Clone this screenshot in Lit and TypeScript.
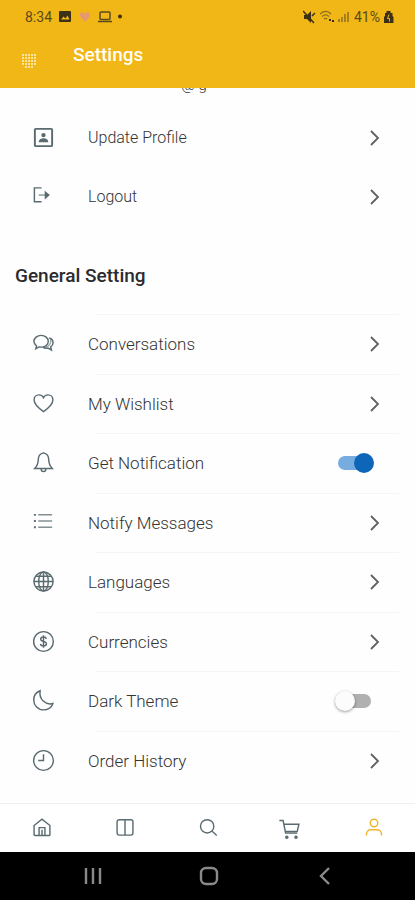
import { LitElement, html, svg, css, nothing } from "lit";
import { customElement, property, state } from "lit/decorators.js";
import { classMap } from "lit/directives/class-map.js";

const rowIcons: Record<string, unknown> = {
  profile: svg`<rect x="3" y="3" width="18" height="18" rx="1" stroke-width="2"/><circle cx="12" cy="9.5" r="2.3" fill="currentColor" stroke="none"/><path d="M7 17c0-3.2 3-4.2 5-4.2s5 1 5 4.2z" fill="currentColor" stroke="none"/>`,
  logout: svg`<path d="M10 3H2.500v14.500H10"/><path d="M7 10.500h10" opacity=".7"/><path d="M14 7.500l3.500 3-3.500 3z" fill="currentColor"/>`,
  chat: svg`<path d="M9.500 3.500c-4 0-7.500 2.700-7.500 6.200 0 2 1.100 3.700 2.800 4.900L4 17.500l3.300-1.900c.7.2 1.400.2 2.200.2 4.200 0 7.500-2.700 7.500-6.100s-3.300-6.200-7.500-6.200z"/><path d="M18 6.200c2.500.8 4 2.600 4 4.900 0 1.900-1 3.400-2.500 4.500l.8 3.200-3.500-2c-2.100.4-4 0-5.500-1"/><path d="M19.500 8c.8 3.400-1.300 7-6 8" opacity=".6"/>`,
  heart: svg`<path d="M12 20.500C6.500 16.500 2.200 12.700 2.200 8.300 2.200 5.300 4.400 3 7.200 3c2 0 3.800 1 4.800 2.900C13 4 14.800 3 16.800 3c2.800 0 5 2.300 5 5.300 0 4.400-4.300 8.200-9.800 12.200z"/>`,
  bell: svg`<path d="M12 2c-3.800.8-5.500 3.500-5.500 7.500 0 4.300-1.500 6.500-3.700 8.800h18.400c-2.200-2.300-3.700-4.500-3.700-8.800 0-4-1.700-6.700-5.500-7.500z"/><path d="M9.500 18.500c0 1.800 1 3 2.500 3s2.500-1.200 2.500-3"/>`,
  list: svg`<path d="M6.500 4h14.500M6.500 10.500h14.500M6.500 17h14.500" opacity=".75"/><path d="M2 4h2M2 10.500h2M2 17h2" stroke-width="2"/>`,
  globe: svg`<circle cx="12" cy="12" r="10"/><ellipse cx="12" cy="12" rx="5" ry="10"/><path d="M12 2v20M2 12h20M4 6.500h16M4 17.500h16"/>`,
  dollar: svg`<circle cx="12" cy="12" r="10.300"/><path d="M15 9.300c-.3-1.300-1.400-1.900-3-1.900s-2.900.8-2.900 2.200c0 3.100 6 1.500 6 4.700 0 1.500-1.300 2.300-3.100 2.300s-3-.8-3.200-2.200M12 5.600v12.800"/>`,
  moon: svg`<path d="M8.500 1.800C4.300 3.400 1.800 7 1.800 11.500c0 5.700 4.500 10.300 10.300 10.300 4.500 0 8.500-2.700 9.700-6.600-7.700 1.800-14.800-4.200-13.300-13.400z"/>`,
  clock: svg`<circle cx="12" cy="12" r="10.300"/><path d="M12 5.500V12H6.500"/>`,
};

const tabIcons: Record<string, unknown> = {
  home: svg`<path d="M2.500 9L12 1.500 21.500 9v11a1 1 0 0 1-1 1h-17a1 1 0 0 1-1-1z"/><path d="M8.500 21v-9.500h7V21M12 14v7"/>`,
  columns: svg`<rect x="2.500" y="2" width="19" height="18.500" rx="2.500"/><path d="M12 2v18.500"/>`,
  search: svg`<circle cx="11" cy="10" r="8"/><path d="M17 16l5.500 5"/>`,
  cart: svg`<path d="M-2 3h4.500l3 15h14M3.500 7.500h18l-2 8.500H5.500"/><circle cx="7" cy="23" r="1.300" fill="currentColor"/><circle cx="18" cy="23" r="1.300" fill="currentColor"/>`,
  user: svg`<circle cx="12" cy="6" r="4.500"/><path d="M3 21v-1.500c0-3.300 2.400-5.500 5.500-5.500h7c3.100 0 5.500 2.200 5.500 5.500V21"/>`,
};

@customElement("setting-row")
export class SettingRow extends LitElement {
  @property() icon = "";
  @property() text = "";
  @property({ type: Boolean }) toggle = false;
  @property({ type: Boolean }) on = false;
  @property({ type: Boolean }) lined = false;

  static styles = css`
    :host { display: flex; }
    .row {
      flex: 1; display: grid; grid-template-columns: 56px 1fr; align-items: stretch;
      padding: 0 16px 0 32px; margin: 0; border: 0; background: none;
      font: inherit; color: inherit; text-align: left; cursor: pointer;
    }
    .icon { align-self: center; width: 23px; height: 23px; color: #5a6b70; fill: none; stroke: currentColor; stroke-width: 1.5; }
    .body {
      display: flex; align-items: center; justify-content: space-between;
      padding-right: 18px; border-top: 1px solid transparent;
    }
    .lined { border-image: linear-gradient(to right, transparent 8px, #f5f5f5 8px) 1; }
    .chevron { width: 12px; height: 18px; fill: none; stroke: #606060; stroke-width: 1.8; }
    .switch {
      appearance: none; position: relative; width: 34px; height: 14px; margin: 0 10px 0 0;
      border-radius: 7px; background: #b0b0b0; cursor: pointer;
    }
    .switch::before {
      content: ""; position: absolute; top: -3px; left: -2px; width: 20px; height: 20px;
      border-radius: 50%; background: #fcfcfc; box-shadow: 0 1px 3px #0006;
    }
    .switch:checked { background: #77ace0; margin-right: 9px; }
    .switch:checked::before { left: 16px; background: #0e66b9; box-shadow: none; }
  `;

  private body(control: unknown) {
    return html`
      <svg class="icon" viewBox="0 0 24 24" aria-hidden="true">${rowIcons[this.icon]}</svg>
      <span class=${classMap({ body: true, lined: this.lined })}><span>${this.text}</span>${control}</span>`;
  }

  render() {
    return this.toggle
      ? html`<label class="row">${this.body(html`<input class="switch" type="checkbox" role="switch" .checked=${this.on} />`)}</label>`
      : html`<button class="row">${this.body(html`<svg class="chevron" viewBox="0 0 12 18" aria-hidden="true"><path d="M2 2l7 7-7 7" /></svg>`)}</button>`;
  }
}

interface Item { icon: string; text: string; toggle?: boolean; on?: boolean }

const account: Item[] = [
  { icon: "profile", text: "Update Profile" },
  { icon: "logout", text: "Logout" },
];

const general: Item[] = [
  { icon: "chat", text: "Conversations" },
  { icon: "heart", text: "My Wishlist" },
  { icon: "bell", text: "Get Notification", toggle: true, on: true },
  { icon: "list", text: "Notify Messages" },
  { icon: "globe", text: "Languages" },
  { icon: "dollar", text: "Currencies" },
  { icon: "moon", text: "Dark Theme", toggle: true },
  { icon: "clock", text: "Order History" },
];

@customElement("app-root")
export class AppRoot extends LitElement {
  @state() private tab = "user";

  static styles = css`
    :host {
      display: flex; flex-direction: column; min-height: 100vh; background: #fefefe;
      font: 300 17px/24px Roboto, "Noto Sans", sans-serif; color: #333;
    }
    .top { background: #f1b716; height: 88px; }
    .status { display: flex; align-items: center; justify-content: space-between; height: 34px; padding: 0 21px 0 25px; font-weight: 400; font-size: 14px; color: #5b4a1c; }
    .group { display: flex; align-items: center; gap: 6px; }
    .tight { gap: 3px; }
    .glyph { width: 14px; height: 14px; display: block; }
    .battery { width: 11px; }
    .bar { display: flex; align-items: center; height: 42px; padding-left: 20px; }
    .menu { display: flex; padding: 0; margin: 12px 0 0; border: 0; background: none; cursor: pointer; }
    .dots { width: 18px; height: 18px; fill: #fff3cf; }
    .title { margin: 0 0 0 35px; font-size: 19px; line-height: 24px; font-weight: 500; color: #fffdf5; }
    main { flex: 1; display: flex; flex-direction: column; }
    .email { display: flex; align-items: flex-end; justify-content: center; height: 20px; overflow: hidden; margin-right: 27px; font-size: 15px; }
    .email span { height: 35px; }
    .account { display: grid; grid-auto-rows: 59px; font-size: 16px; }
    .heading { margin: 38px 15px 26px; font-size: 19px; line-height: 24px; font-weight: 500; color: #2b2b2f; }
    .general { flex: 1; display: grid; grid-auto-rows: minmax(56px, 1fr); padding-bottom: 13px; }
    .tabs { display: grid; grid-template-columns: repeat(5, 1fr); height: 49px; border-top: 1px solid #f0f0f0; box-sizing: border-box; background: #fff; }
    .tab { display: grid; place-items: center; padding: 0; border: 0; background: none; color: #5a6b70; cursor: pointer; }
    .active { color: #eeb52a; }
    .tabicon { width: 20px; height: 20px; fill: none; stroke: currentColor; stroke-width: 1.7; overflow: visible; }
    .system { display: grid; grid-template-columns: repeat(3, 1fr); height: 48px; padding: 0 32px 0 35px; background: #000; }
    .key { display: grid; place-items: center; padding: 0; border: 0; background: none; cursor: pointer; }
    .keyicon { width: 20px; height: 20px; fill: none; stroke: #8a8a8a; stroke-width: 2.4; }
  `;

  private rows(items: Item[], lined: boolean) {
    return items.map((i) => html`<setting-row .icon=${i.icon} .text=${i.text} .toggle=${!!i.toggle} .on=${!!i.on} .lined=${lined}></setting-row>`);
  }

  private dots() {
    const out = [];
    for (let y = 0; y < 5; y++)
      for (let x = 0; x < 5; x++) {
        const edge = (x === 0 || x === 4) && y === 4;
        out.push(edge ? nothing : svg`<circle cx=${3 + x * 3} cy=${3 + y * 3} r="1" />`);
      }
    return out;
  }

  render() {
    return html`
      <header class="top">
        <div class="status">
          <div class="group">
            <span>8:34</span>
            <svg class="glyph" viewBox="0 0 14 14"><rect x="1" y="1" width="12" height="11" rx="1" fill="#3d3115"/><path d="M3 9.500l2.500-3 2 2 2-3 2 4z" fill="#f1b716"/></svg>
            <svg class="glyph" viewBox="0 0 14 14"><path d="M7 12L2 6.500V3l3-1 2 2 2-2 3 1v3.500z" fill="#e49a6c"/></svg>
            <svg class="glyph" viewBox="0 0 14 14" fill="none" stroke="#5b4a1c" stroke-width="1.500"><rect x="2" y="2" width="10" height="7.500" rx="1"/><path d="M0 11.500h14"/></svg>
            <svg class="glyph" viewBox="0 0 14 14"><circle cx="2" cy="6.500" r="2" fill="#3d3115"/></svg>
          </div>
          <div class="group tight">
            <svg class="glyph" viewBox="0 0 14 14"><path d="M1 5h3l4-4v12L4 9H1z" fill="#3d3115"/><path d="M0 1l11 12M9 6l3-3" stroke="#3d3115" stroke-width="1.500"/></svg>
            <svg class="glyph" viewBox="0 0 14 14" fill="none" stroke="#8a6d1c" stroke-width="1.300"><path d="M0 4c4-3.500 8-3.500 11 0M2 6.500c2.500-2 5-2 7 0M4 9c1-.8 2-.8 3 0"/><path d="M9 10h2M12 11h2" stroke="#3d3115" stroke-width="2"/></svg>
            <svg class="glyph" viewBox="0 0 14 14" stroke="#8a6d1c" stroke-width="1.500"><path d="M2 12v-3M5 12V7M8 12V4M11 12V2"/></svg>
            <span>41%</span>
            <svg class="glyph battery" viewBox="0 0 11 14"><path d="M3.500 1h4v2h2v3l1 1v6H1V7l1-1V3h1.500z" fill="#3d3115"/><path d="M6 4.500L4.500 8.500h2v3" stroke="#f1b716" fill="none"/></svg>
          </div>
        </div>
        <div class="bar">
          <button class="menu" aria-label="Menu"><svg class="dots" viewBox="0 0 18 18">${this.dots()}</svg></button>
          <h1 class="title">Settings</h1>
        </div>
      </header>
      <main>
        <div class="email"><span>@ g</span></div>
        <div class="account">${this.rows(account, false)}</div>
        <h2 class="heading">General Setting</h2>
        <div class="general">${this.rows(general, true)}</div>
      </main>
      <nav class="tabs">
        ${Object.keys(tabIcons).map((name) => html`
          <button class=${classMap({ tab: true, active: this.tab === name })} aria-label=${name} @click=${() => (this.tab = name)}>
            <svg class="tabicon" viewBox="0 0 24 24">${tabIcons[name]}</svg>
          </button>`)}
      </nav>
      <div class="system">
        <button class="key" aria-label="Recent apps"><svg class="keyicon" viewBox="0 0 20 20"><path d="M3 2v16M10 2v16M17 2v16" /></svg></button>
        <button class="key" aria-label="Home"><svg class="keyicon" viewBox="0 0 20 20"><rect x="2" y="2" width="16" height="16" rx="5" /></svg></button>
        <button class="key" aria-label="Back"><svg class="keyicon" viewBox="0 0 20 20"><path d="M14 2l-8 8 8 8" /></svg></button>
      </div>
    `;
  }
}
